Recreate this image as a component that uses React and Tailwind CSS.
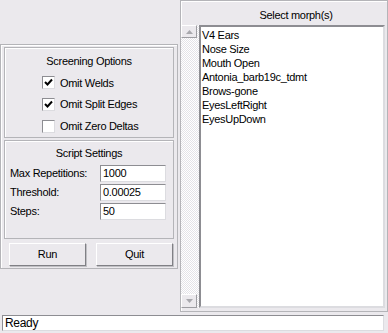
import React from "react";

const morphs = [
  "V4 Ears",
  "Nose Size",
  "Mouth Open",
  "Antonia_barb19c_tdmt",
  "Brows-gone",
  "EyesLeftRight",
  "EyesUpDown",
];

function Check({ checked, label }) {
  return (
    <div className="flex items-center h-[22px] pl-[37px]">
      <div className="w-[13px] h-[13px] bg-white border border-t-[#8d8d92] border-l-[#8d8d92] border-r-[#dcdce0] border-b-[#dcdce0] flex items-center justify-center">
        {checked && (
          <svg width="9" height="9" viewBox="0 0 9 9">
            <path d="M1 4 L3.5 6.5 L8 1.5" stroke="#000" strokeWidth="2" fill="none" />
          </svg>
        )}
      </div>
      <span className="ml-[5px]">{label}</span>
    </div>
  );
}

function Field({ label, value }) {
  return (
    <div className="flex items-center h-[19px] pl-[5px]">
      <span className="w-[90px]">{label}</span>
      <div className="w-[66px] h-[17px] bg-white border border-t-[#8d8d92] border-l-[#8d8d92] border-r-[#dcdce0] border-b-[#dcdce0] pl-[2px] leading-[15px]">
        {value}
      </div>
    </div>
  );
}

function Button({ children }) {
  return (
    <button className="w-[77px] h-[23px] bg-[#ebe9ed] border border-t-white border-l-white border-r-[#808085] border-b-[#808085] shadow-[1px_1px_0_#c0c0c4]">
      {children}
    </button>
  );
}

export default function App() {
  return (
    <div
      className="w-[388px] h-[333px] bg-[#ebe9ed] text-black text-[11px] tracking-[-0.3px] flex flex-col overflow-hidden"
      style={{ fontFamily: '"Liberation Sans", Arial, sans-serif' }}
    >
      <div className="flex h-[312px]">
        {/* left column */}
        <div className="w-[180px] flex flex-col">
          <div className="h-[44px]" />
          <div className="w-[178px] h-[225px] border border-[#b4b4b8] shadow-[inset_1px_1px_0_#fff] p-[2px] flex flex-col">
            <div className="h-[91px] border border-[#b4b4b8] shadow-[inset_1px_1px_0_#fff] mx-[1px] flex flex-col">
              <div className="text-center h-[24px] leading-[24px] pt-[1px]">Screening Options</div>
              <Check checked label="Omit Welds" />
              <Check checked label="Omit Split Edges" />
              <Check label="Omit Zero Deltas" />
            </div>
            <div className="h-[101px] mt-[2px] border border-[#b4b4b8] shadow-[inset_1px_1px_0_#fff] mx-[1px] flex flex-col">
              <div className="text-center h-[23px] leading-[24px]">Script Settings</div>
              <Field label="Max Repetitions:" value="1000" />
              <Field label="Threshold:" value="0.00025" />
              <Field label="Steps:" value="50" />
            </div>
            <div className="flex gap-[10px] pl-[6px] mt-[4px]">
              <Button>Run</Button>
              <Button>Quit</Button>
            </div>
          </div>
        </div>

        {/* right panel */}
        <div className="w-[208px] h-[312px] border border-[#b4b4b8] shadow-[inset_1px_1px_0_#fff] pr-[2px] flex flex-col">
          <div className="h-[24px] leading-[24px] text-center pl-[26px] pt-[2px]">Select morph(s)</div>
          <div className="flex flex-1 pb-[3px]">
            <div
              className="w-[18px] flex flex-col justify-between"
              style={{
                backgroundImage:
                  "repeating-conic-gradient(#ffffff 0 25%, #e4e3e8 0 50%)",
                backgroundSize: "2px 2px",
              }}
            >
              <div className="w-[16px] h-[13px] bg-[#ebe9ed] border border-t-white border-l-white border-r-[#9d9da2] border-b-[#9d9da2] flex items-center justify-center">
                <svg width="7" height="4" viewBox="0 0 7 4">
                  <path d="M0 4 L3.5 0 L7 4 Z" fill="#a8a8ad" />
                </svg>
              </div>
              <div className="w-[16px] h-[14px] bg-[#ebe9ed] border border-t-white border-l-white border-r-[#9d9da2] border-b-[#9d9da2] flex items-center justify-center">
                <svg width="7" height="4" viewBox="0 0 7 4">
                  <path d="M0 0 L3.5 4 L7 0 Z" fill="#a8a8ad" />
                </svg>
              </div>
            </div>
            <div className="flex-1 bg-white border-2 border-t-[#8d8d92] border-l-[#8d8d92] border-r-[#dcdce0] border-b-[#dcdce0] pl-[1px] pt-[1px]">
              {morphs.map((m) => (
                <div key={m} className="h-[14px] leading-[14px]">
                  {m}
                </div>
              ))}
            </div>
          </div>
        </div>
      </div>

      {/* status bar */}
      <div className="h-[21px] px-[2px] pt-[3px] pb-[2px]">
        <div className="h-full w-[382px] bg-white border border-t-[#8d8d92] border-l-[#8d8d92] border-r-[#dcdce0] border-b-[#dcdce0] pl-[2px] leading-[14px] text-[12px]">
          Ready
        </div>
      </div>
    </div>
  );
}
